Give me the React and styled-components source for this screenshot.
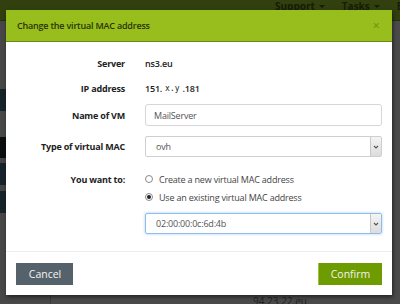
import styled, { createGlobalStyle } from 'styled-components';

const Global = createGlobalStyle`
	html, body {
		margin: 0;
		padding: 0;
		background: #4a4a4a;
	}
	body {
		font-family: "Open Sans", "Liberation Sans", sans-serif;
	}
`;

const Page = styled.div`
	position: relative;
	width: 400px;
	height: 304px;
	overflow: hidden;
	background: #4a4a4a;
	display: flex;
	flex-direction: column;
`;

const Navbar = styled.div`
	height: 21px;
	flex-shrink: 0;
	box-sizing: border-box;
	background: #323f0e;
	border-bottom: 1px solid #262f0b;
	display: flex;
	align-items: flex-start;
	gap: 17px;
	padding: 0 0 0 275px;
	white-space: nowrap;
`;

const NavItem = styled.span`
	color: #151c08;
	font-size: 10px;
	line-height: 12px;
	font-weight: 700;
	display: flex;
	align-items: center;
	gap: 4px;
`;

const Caret = styled.span`
	width: 0;
	height: 0;
	border-left: 3px solid transparent;
	border-right: 3px solid transparent;
	border-top: 3px solid #151c08;
`;

const Main = styled.div`
	flex: 1;
	display: flex;
`;

const Sidebar = styled.div`
	width: 50px;
	display: flex;
	flex-direction: column;
	border-right: 1px solid #3a3a3a;
`;

const Stripe = styled.div`
	height: ${p => p.$h}px;
	background: ${p => p.$bg};
`;

const Content = styled.div`
	flex: 1;
	display: flex;
	flex-direction: column;
	justify-content: flex-end;
	padding-left: 202px;
`;

const HostName = styled.div`
	color: #222;
	font-size: 10px;
	line-height: 10px;
	height: 8px;
	overflow: hidden;
`;

const Modal = styled.div`
	position: absolute;
	left: 6px;
	top: 10px;
	width: 386px;
	height: 285px;
	background: #fff;
	box-shadow: 1px 2px 4px rgba(0, 0, 0, 0.55);
	display: flex;
	flex-direction: column;
`;

const Header = styled.div`
	height: 31px;
	background: #98be1d;
	border-bottom: 1px solid #6b8712;
	display: flex;
	align-items: center;
	justify-content: space-between;
	padding: 0 12px 0 11px;
`;

const Title = styled.h4`
	margin: 0;
	font-size: 9px;
	letter-spacing: -0.2px;
	font-weight: 600;
	color: #2a3406;
`;

const Close = styled.span`
	color: #78971a;
	font-size: 13px;
	line-height: 1;
	font-weight: 600;
`;

const Body = styled.div`
	flex: 1;
	padding: 10px 10px 0 10px;
	display: grid;
	grid-template-columns: 109px 237px;
	column-gap: 20px;
	align-content: start;
	border-bottom: 1px solid #eee;
`;

const Label = styled.div`
	margin-top: ${p => p.$mt || 0}px;
	height: ${p => p.$h || 22}px;
	display: flex;
	align-items: center;
	justify-content: flex-end;
	font-size: 9px;
	letter-spacing: -0.2px;
	font-weight: 700;
	color: #222;
`;

const Value = styled.div`
	margin-top: ${p => p.$mt || 0}px;
	height: ${p => p.$h || 22}px;
	display: flex;
	align-items: center;
	font-size: 9px;
	letter-spacing: -0.2px;
	font-weight: 600;
	color: #222;
`;

const Mono = styled.span`
	font-family: "DejaVu Sans Mono", "Liberation Mono", monospace;
	font-size: 8px;
	font-weight: 400;
	letter-spacing: 0;
	margin: 0 3px;
`;

const Input = styled.div`
	width: 100%;
	height: 100%;
	box-sizing: border-box;
	border: 1px solid #d6d6d6;
	border-radius: 3px;
	display: flex;
	align-items: center;
	padding-left: 8px;
	font-size: 9px;
	font-weight: 400;
	color: #555;
`;

const Select = styled.div`
	width: 100%;
	height: 100%;
	box-sizing: border-box;
	border: 1px solid ${p => (p.$focus ? '#8fbcea' : '#cfcfcf')};
	box-shadow: ${p => (p.$focus ? '0 0 3px rgba(102, 175, 233, 0.6)' : 'none')};
	border-radius: 2px;
	display: flex;
	align-items: center;
	font-size: 9px;
	font-weight: 400;
	color: #555;
`;

const SelectText = styled.span`
	flex: 1;
	padding-left: 10px;
`;

const Arrow = styled.span`
	width: 10px;
	height: 100%;
	background: linear-gradient(#f4f4f4, #dcdcdc);
	border-left: 1px solid #c8c8c8;
	display: flex;
	align-items: center;
	justify-content: center;
`;

const Radios = styled.div`
	margin-top: ${p => p.$mt || 0}px;
	display: flex;
	flex-direction: column;
`;

const RadioRow = styled.label`
	height: 18px;
	display: flex;
	align-items: center;
	gap: 6px;
	font-size: 9px;
	letter-spacing: -0.2px;
	color: #444;
`;

const Dot = styled.span`
	width: 8px;
	height: 8px;
	box-sizing: border-box;
	border-radius: 50%;
	border: 1px solid #8a8a8a;
	background: #fff;
	display: flex;
	align-items: center;
	justify-content: center;
	&::after {
		content: '';
		width: 4px;
		height: 4px;
		border-radius: 50%;
		background: ${p => (p.$on ? '#222' : 'transparent')};
	}
`;

const Footer = styled.div`
	height: 42px;
	display: flex;
	align-items: center;
	justify-content: space-between;
	padding: 0 10px;
	padding-top: 1px;
`;

const Button = styled.button`
	height: 22px;
	width: ${p => p.$w}px;
	border: none;
	border-left: 1px solid ${p => p.$edge};
	background: ${p => p.$bg};
	color: #f2f2f2;
	font-family: inherit;
	font-size: 10.5px;
	padding: 0;
`;

const Chevron = () => (
	<svg width="6" height="4" viewBox="0 0 6 4">
		<path d="M1 1l2 2 2-2" fill="none" stroke="#555" strokeWidth="1.1" />
	</svg>
);

const stripes = [
	[68, '#474747'],
	[22, '#17232a'],
	[26, '#484848'],
	[21, '#0b0e0e'],
	[5, '#444'],
	[22, '#17232a'],
	[6, '#444'],
	[22, '#17232a'],
	[90, '#474747'],
];

export default function App() {
	return (
		<Page>
			<Global />
			<Navbar>
				<NavItem>Support <Caret /></NavItem>
				<NavItem>Tasks <Caret /></NavItem>
				<NavItem>B</NavItem>
			</Navbar>
			<Main>
				<Sidebar>
					{stripes.map(([h, bg], i) => (
						<Stripe key={i} $h={h} $bg={bg} />
					))}
				</Sidebar>
				<Content>
					<HostName>94.23.22.eu</HostName>
				</Content>
			</Main>

			<Modal>
				<Header>
					<Title>Change the virtual MAC address</Title>
					<Close>×</Close>
				</Header>
				<Body>
					<Label>Server</Label>
					<Value>ns3.eu</Value>

					<Label $mt={3}>IP address</Label>
					<Value $mt={3}>151.<Mono>x.y</Mono>.181</Value>

					<Label $mt={5}>Name of VM</Label>
					<Value $mt={5}><Input>MailServer</Input></Value>

					<Label $mt={10} $h={21}>Type of virtual MAC</Label>
					<Value $mt={10} $h={21}>
						<Select><SelectText>ovh</SelectText><Arrow><Chevron /></Arrow></Select>
					</Value>

					<Label $mt={13} $h={18}>You want to:</Label>
					<Radios $mt={13}>
						<RadioRow><Dot />Create a new virtual MAC address</RadioRow>
						<RadioRow><Dot $on />Use an existing virtual MAC address</RadioRow>
					</Radios>

					<div />
					<Value $mt={7} $h={21}>
						<Select $focus><SelectText>02:00:00:0c:6d:4b</SelectText><Arrow><Chevron /></Arrow></Select>
					</Value>
				</Body>
				<Footer>
					<Button $w={57} $bg="#56626b" $edge="#56626b">Cancel</Button>
					<Button $w={64} $bg="#6e9c00" $edge="#9cc24a">Confirm</Button>
				</Footer>
			</Modal>
		</Page>
	);
}
